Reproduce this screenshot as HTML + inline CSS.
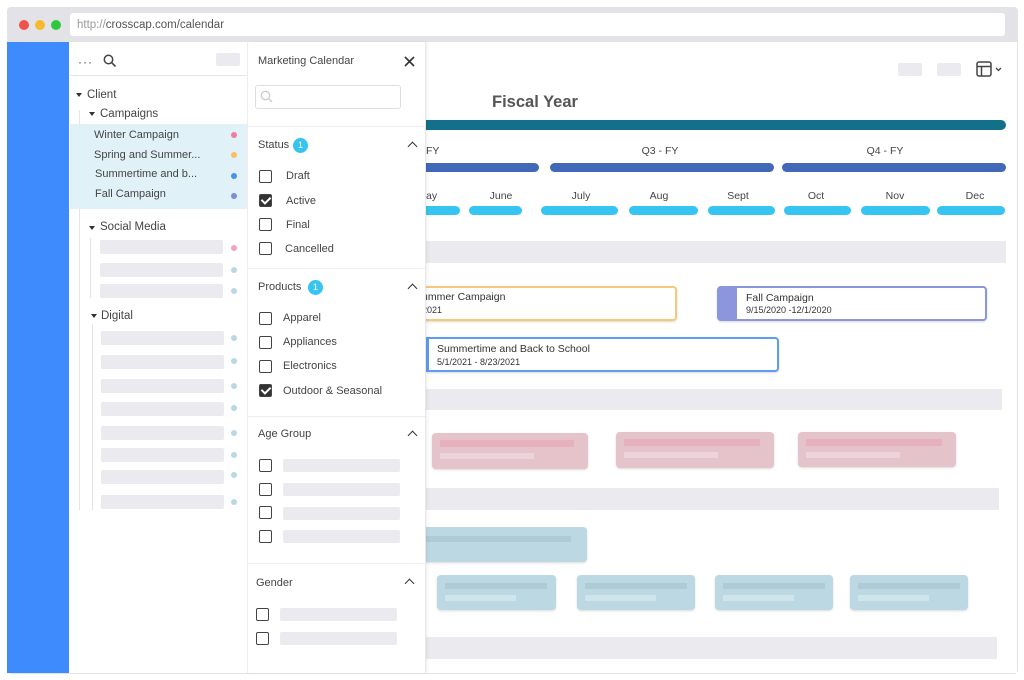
<!DOCTYPE html>
<html><head><meta charset="utf-8"><style>
*{margin:0;padding:0;box-sizing:border-box}
body{width:1024px;height:680px;background:#fff;position:relative;overflow:hidden;font-family:"Liberation Sans",sans-serif;color:#444}
.a{position:absolute}
.sk{position:absolute;background:#ebebef;border-radius:2px}
.dot{position:absolute;width:6px;height:6px;border-radius:50%}
.t{position:absolute;font-size:11px;color:#444;white-space:nowrap}
.cb{position:absolute;width:13px;height:13px;border:1.5px solid #444;border-radius:2px}
.cb.on{background:#333}
.cb.on:after{content:"";position:absolute;left:3px;top:0px;width:4px;height:7px;border:solid #fff;border-width:0 2px 2px 0;transform:rotate(45deg)}
.chev{position:absolute;width:7px;height:7px;border-left:1.8px solid #333;border-top:1.8px solid #333;transform:rotate(45deg)}
.badge{position:absolute;width:15px;height:15px;border-radius:50%;background:#35c5f0;color:#fff;font-size:9px;text-align:center;line-height:15px}
.tri{position:absolute;width:0;height:0;border-left:3px solid transparent;border-right:3px solid transparent;border-top:4px solid #333}
.m{position:absolute;font-size:10.5px;color:#444;text-align:center}
.mb{position:absolute;top:206px;height:9px;border-radius:5px;background:#35c5f0}
.qb{position:absolute;top:163px;height:9px;border-radius:5px;background:#4169b8}
.gb{position:absolute;background:#ebebef}
.pc{position:absolute;background:#e5c3ca;border-radius:4px;box-shadow:0 1px 2px rgba(0,0,0,.15)}
.bc{position:absolute;background:#bcd8e3;border-radius:4px;box-shadow:0 1px 2px rgba(0,0,0,.15)}
</style></head><body>
<!-- frame -->
<div class="a" style="left:7px;top:7px;width:1011px;height:667px;background:#e3e3e7;border-radius:4px"></div>
<div class="a" style="left:19px;top:20px;width:10px;height:10px;border-radius:50%;background:#f0524c"></div>
<div class="a" style="left:35px;top:20px;width:10px;height:10px;border-radius:50%;background:#f7b92e"></div>
<div class="a" style="left:51px;top:20px;width:10px;height:10px;border-radius:50%;background:#2dc840"></div>
<div class="a" style="left:70px;top:13px;width:935px;height:23px;background:#fff;border-radius:3px"></div>
<div class="t" style="left:77px;top:19px;font-size:11.5px;color:#555"><span style="color:#999">http://</span>crosscap.com/calendar</div>
<div class="a" style="left:7px;top:42px;width:62px;height:631px;background:#3d8bfd"></div>
<div class="a" style="left:69px;top:42px;width:948px;height:631px;background:#fff"></div>

<!-- main -->
<div class="sk" style="left:898px;top:63px;width:24px;height:13px"></div>
<div class="sk" style="left:937px;top:63px;width:24px;height:13px"></div>
<svg class="a" style="left:976px;top:61px" width="30" height="16" viewBox="0 0 30 16"><rect x="1" y="1" width="14" height="14" rx="2" fill="none" stroke="#444" stroke-width="1.5"/><path d="M1 5.5H15M5.5 5.5V15" stroke="#444" stroke-width="1.5"/><path d="M20 7L22.5 9.5L25 7" stroke="#444" stroke-width="1.3" fill="none"/></svg>
<div class="t" style="left:492px;top:93px;font-size:16.5px;font-weight:bold;color:#555">Fiscal Year</div>
<div class="a" style="left:426px;top:120px;width:580px;height:10px;border-radius:0 5px 5px 0;background:#137089"></div>
<div class="m" style="left:426px;top:145px">FY</div>
<div class="m" style="left:600px;top:145px;width:120px">Q3 - FY</div>
<div class="m" style="left:825px;top:145px;width:120px">Q4 - FY</div>
<div class="qb" style="left:420px;width:119px;border-radius:0 5px 5px 0"></div>
<div class="qb" style="left:550px;width:224px"></div>
<div class="qb" style="left:782px;width:224px"></div>
<div class="m" style="left:426px;top:190px">ay</div>
<div class="m" style="left:470px;top:190px;width:62px">June</div>
<div class="m" style="left:550px;top:190px;width:62px">July</div>
<div class="m" style="left:628px;top:190px;width:62px">Aug</div>
<div class="m" style="left:707px;top:190px;width:62px">Sept</div>
<div class="m" style="left:785px;top:190px;width:62px">Oct</div>
<div class="m" style="left:864px;top:190px;width:62px">Nov</div>
<div class="m" style="left:944px;top:190px;width:62px">Dec</div>
<div class="mb" style="left:420px;width:40px;border-radius:0 5px 5px 0"></div>
<div class="mb" style="left:469px;width:53px"></div>
<div class="mb" style="left:541px;width:77px"></div>
<div class="mb" style="left:629px;width:69px"></div>
<div class="mb" style="left:708px;width:67px"></div>
<div class="mb" style="left:784px;width:67px"></div>
<div class="mb" style="left:861px;width:69px"></div>
<div class="mb" style="left:937px;width:68px"></div>
<div class="gb" style="left:426px;top:241px;width:580px;height:22px"></div>
<div class="gb" style="left:426px;top:389px;width:576px;height:21px"></div>
<div class="gb" style="left:426px;top:488px;width:573px;height:22px"></div>
<div class="gb" style="left:426px;top:637px;width:571px;height:22px"></div>

<div class="a" style="left:400px;top:286px;width:277px;height:35px;border:2px solid #f5c87a;border-radius:0 4px 4px 0;box-shadow:0 1px 2px rgba(0,0,0,.15)"></div>
<div class="t" style="left:422px;top:291px;font-size:10.5px;color:#333">ummer Campaign</div>
<div class="t" style="left:422px;top:305px;font-size:9px;color:#333">2021</div>
<div class="a" style="left:717px;top:286px;width:270px;height:35px;border:2px solid #8b96dc;border-left:20px solid #8b96dc;border-radius:4px;box-shadow:0 1px 2px rgba(0,0,0,.15)"></div>
<div class="t" style="left:746px;top:292px;font-size:10.5px;color:#333">Fall Campaign</div>
<div class="t" style="left:746px;top:305px;font-size:9px;color:#333">9/15/2020 -12/1/2020</div>
<div class="a" style="left:426px;top:337px;width:353px;height:35px;border:2px solid #5f9cf0;border-left:3px solid #5f9cf0;border-radius:0 4px 4px 0;box-shadow:0 1px 2px rgba(0,0,0,.15)"></div>
<div class="t" style="left:437px;top:343px;font-size:10.5px;color:#333">Summertime and Back to School</div>
<div class="t" style="left:437px;top:357px;font-size:9px;color:#333">5/1/2021 - 8/23/2021</div>

<div class="pc" style="left:432px;top:433px;width:156px;height:36px"></div>
<div class="a" style="left:440px;top:440px;width:134px;height:7px;background:#e6b0bd"></div><div class="a" style="left:440px;top:453px;width:94px;height:6px;background:#ecd4da"></div>
<div class="pc" style="left:616px;top:432px;width:158px;height:36px"></div>
<div class="a" style="left:624px;top:439px;width:136px;height:7px;background:#e6b0bd"></div><div class="a" style="left:624px;top:452px;width:94px;height:6px;background:#ecd4da"></div>
<div class="pc" style="left:798px;top:432px;width:158px;height:35px"></div>
<div class="a" style="left:806px;top:439px;width:136px;height:7px;background:#e6b0bd"></div><div class="a" style="left:806px;top:452px;width:94px;height:6px;background:#ecd4da"></div>

<div class="bc" style="left:410px;top:527px;width:177px;height:35px"></div>
<div class="a" style="left:420px;top:536px;width:151px;height:6px;background:#aecbd6"></div>
<div class="bc" style="left:437px;top:575px;width:119px;height:35px"></div>
<div class="a" style="left:445px;top:583px;width:102px;height:6px;background:#aecbd6"></div><div class="a" style="left:445px;top:595px;width:71px;height:6px;background:#d0e4ec"></div>
<div class="bc" style="left:577px;top:575px;width:118px;height:35px"></div>
<div class="a" style="left:585px;top:583px;width:102px;height:6px;background:#aecbd6"></div><div class="a" style="left:585px;top:595px;width:71px;height:6px;background:#d0e4ec"></div>
<div class="bc" style="left:715px;top:575px;width:118px;height:35px"></div>
<div class="a" style="left:723px;top:583px;width:102px;height:6px;background:#aecbd6"></div><div class="a" style="left:723px;top:595px;width:71px;height:6px;background:#d0e4ec"></div>
<div class="bc" style="left:850px;top:575px;width:118px;height:35px"></div>
<div class="a" style="left:858px;top:583px;width:102px;height:6px;background:#aecbd6"></div><div class="a" style="left:858px;top:595px;width:71px;height:6px;background:#d0e4ec"></div>

<!-- tree panel -->
<div class="a" style="left:69px;top:42px;width:179px;height:631px;background:#fff"></div>
<div class="t" style="left:78px;top:55px;font-size:12px;letter-spacing:1px">···</div>
<svg class="a" style="left:103px;top:54px" width="14" height="14" viewBox="0 0 14 14"><circle cx="5.5" cy="5.5" r="4.2" fill="none" stroke="#444" stroke-width="1.5"/><path d="M8.6 8.6L12.5 12.5" stroke="#444" stroke-width="1.6"/></svg>
<div class="sk" style="left:216px;top:53px;width:24px;height:13px"></div>
<div class="a" style="left:70px;top:75px;width:177px;height:1px;background:#e6e6e6"></div>
<div class="a" style="left:247px;top:42px;width:1px;height:631px;background:#eee"></div>
<div class="tri" style="left:76px;top:93px"></div>
<div class="t" style="left:87px;top:89px;font-size:11.5px">Client</div>
<div class="a" style="left:79px;top:110px;width:1px;height:400px;background:#e4e4e4"></div>
<div class="tri" style="left:89px;top:112px"></div>
<div class="t" style="left:100px;top:108px;font-size:11.5px">Campaigns</div>
<div class="a" style="left:70px;top:124px;width:177px;height:85px;background:#e1f1f8"></div>
<div class="t" style="left:94px;top:129px">Winter Campaign</div>
<div class="t" style="left:94px;top:149px">Spring and Summer...</div>
<div class="t" style="left:95px;top:168px">Summertime and b...</div>
<div class="t" style="left:95px;top:188px">Fall Campaign</div>
<div class="dot" style="left:231px;top:132px;background:#f27c9e"></div>
<div class="dot" style="left:231px;top:152px;background:#f8bf5c"></div>
<div class="dot" style="left:231px;top:173px;background:#4c8ff0"></div>
<div class="dot" style="left:231px;top:193px;background:#7f89de"></div>
<div class="tri" style="left:89px;top:226px"></div>
<div class="t" style="left:100px;top:221px;font-size:11.5px">Social Media</div>
<div class="a" style="left:90px;top:238px;width:1px;height:60px;background:#e4e4e4"></div>
<div class="sk" style="left:100px;top:240px;width:123px;height:14px"></div><div class="dot" style="left:231px;top:245px;background:#f5a3b8"></div>
<div class="sk" style="left:100px;top:263px;width:123px;height:14px"></div><div class="dot" style="left:231px;top:267px;background:#b9d8e4"></div>
<div class="sk" style="left:100px;top:284px;width:123px;height:14px"></div><div class="dot" style="left:231px;top:288px;background:#b9d8e4"></div>
<div class="tri" style="left:91px;top:314px"></div>
<div class="t" style="left:101px;top:310px;font-size:11.5px">Digital</div>
<div class="a" style="left:92px;top:324px;width:1px;height:186px;background:#e4e4e4"></div>
<div class="sk" style="left:101px;top:331px;width:123px;height:14px"></div><div class="dot" style="left:231px;top:335px;background:#b9d8e4"></div>
<div class="sk" style="left:101px;top:355px;width:123px;height:14px"></div><div class="dot" style="left:231px;top:358px;background:#b9d8e4"></div>
<div class="sk" style="left:101px;top:379px;width:123px;height:14px"></div><div class="dot" style="left:231px;top:383px;background:#b9d8e4"></div>
<div class="sk" style="left:101px;top:402px;width:123px;height:14px"></div><div class="dot" style="left:231px;top:405px;background:#b9d8e4"></div>
<div class="sk" style="left:101px;top:426px;width:123px;height:14px"></div><div class="dot" style="left:231px;top:430px;background:#b9d8e4"></div>
<div class="sk" style="left:101px;top:448px;width:123px;height:14px"></div><div class="dot" style="left:231px;top:452px;background:#b9d8e4"></div>
<div class="sk" style="left:101px;top:470px;width:123px;height:14px"></div><div class="dot" style="left:231px;top:472px;background:#b9d8e4"></div>
<div class="sk" style="left:101px;top:495px;width:123px;height:14px"></div><div class="dot" style="left:231px;top:499px;background:#b9d8e4"></div>

<!-- filter panel -->
<div class="a" style="left:248px;top:42px;width:178px;height:631px;background:#fff;border-right:1px solid #e8e8e8;box-shadow:2px 0 3px rgba(0,0,0,.05)"></div>
<div class="t" style="left:258px;top:55px">Marketing Calendar</div>
<svg class="a" style="left:404px;top:56px" width="11" height="11" viewBox="0 0 11 11"><path d="M1 1L10 10M10 1L1 10" stroke="#333" stroke-width="1.6"/></svg>
<div class="a" style="left:255px;top:85px;width:146px;height:24px;border:1px solid #ddd;border-radius:3px"></div>
<svg class="a" style="left:260px;top:90px" width="14" height="14" viewBox="0 0 14 14"><circle cx="5.5" cy="5.5" r="4.2" fill="none" stroke="#ccc" stroke-width="1.3"/><path d="M8.6 8.6L12 12" stroke="#ccc" stroke-width="1.4"/></svg>
<div class="a" style="left:248px;top:126px;width:177px;height:1px;background:#eee"></div>
<div class="t" style="left:258px;top:139px">Status</div><div class="badge" style="left:293px;top:138px">1</div>
<div class="chev" style="left:409px;top:143px"></div>
<div class="cb" style="left:259px;top:170px"></div><div class="t" style="left:286px;top:170px">Draft</div>
<div class="cb on" style="left:259px;top:194px"></div><div class="t" style="left:286px;top:195px">Active</div>
<div class="cb" style="left:259px;top:218px"></div><div class="t" style="left:286px;top:219px">Final</div>
<div class="cb" style="left:259px;top:242px"></div><div class="t" style="left:285px;top:243px">Cancelled</div>
<div class="a" style="left:248px;top:268px;width:177px;height:1px;background:#eee"></div>
<div class="t" style="left:258px;top:281px">Products</div><div class="badge" style="left:308px;top:280px">1</div>
<div class="chev" style="left:409px;top:285px"></div>
<div class="cb" style="left:259px;top:312px"></div><div class="t" style="left:283px;top:312px">Apparel</div>
<div class="cb" style="left:259px;top:336px"></div><div class="t" style="left:283px;top:336px">Appliances</div>
<div class="cb" style="left:259px;top:360px"></div><div class="t" style="left:283px;top:360px">Electronics</div>
<div class="cb on" style="left:259px;top:384px"></div><div class="t" style="left:283px;top:385px">Outdoor &amp; Seasonal</div>
<div class="a" style="left:248px;top:416px;width:177px;height:1px;background:#eee"></div>
<div class="t" style="left:258px;top:428px">Age Group</div>
<div class="chev" style="left:409px;top:432px"></div>
<div class="cb" style="left:259px;top:459px"></div><div class="sk" style="left:283px;top:459px;width:117px;height:13px"></div>
<div class="cb" style="left:259px;top:483px"></div><div class="sk" style="left:283px;top:483px;width:117px;height:13px"></div>
<div class="cb" style="left:259px;top:506px"></div><div class="sk" style="left:283px;top:507px;width:117px;height:13px"></div>
<div class="cb" style="left:259px;top:530px"></div><div class="sk" style="left:283px;top:530px;width:117px;height:13px"></div>
<div class="a" style="left:248px;top:563px;width:177px;height:1px;background:#eee"></div>
<div class="t" style="left:256px;top:577px">Gender</div>
<div class="chev" style="left:406px;top:580px"></div>
<div class="cb" style="left:256px;top:608px"></div><div class="sk" style="left:280px;top:608px;width:117px;height:13px"></div>
<div class="cb" style="left:256px;top:632px"></div><div class="sk" style="left:280px;top:632px;width:117px;height:13px"></div>
</body></html>
